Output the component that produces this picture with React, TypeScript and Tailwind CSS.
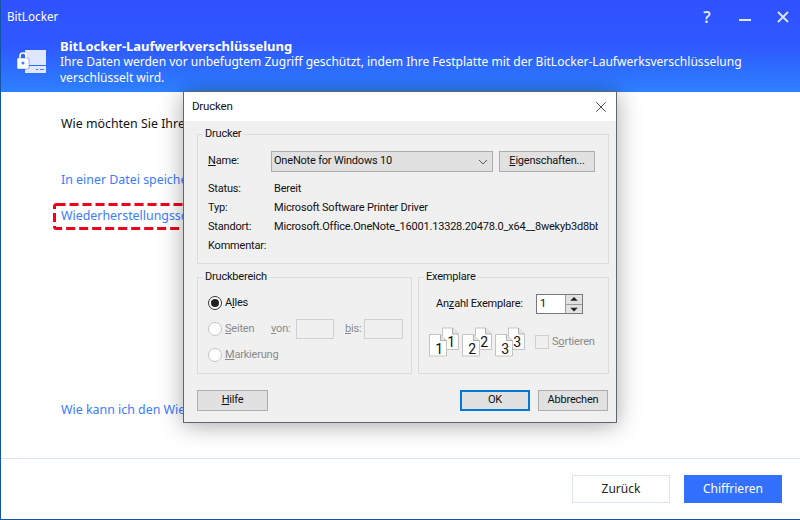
import { X } from 'lucide-react';
import type { ReactNode } from 'react';

function GroupBox({ title, className, children }: { title: string; className: string; children: ReactNode }) {
  return (
    <div className={`relative border border-[#dcdcdc] ${className}`}>
      <span className="absolute -top-[9px] left-[5px] bg-[#f0f0f0] px-[2px] leading-[16px] text-[#111]">{title}</span>
      {children}
    </div>
  );
}

function WinButton({ className, children }: { className: string; children: ReactNode }) {
  return (
    <div className={`flex h-[21px] items-center justify-center bg-[#e1e1e1] text-[#111] ${className}`}>{children}</div>
  );
}

function Radio({ checked, label, hotkey, rest }: { checked?: boolean; label?: string; hotkey: string; rest: string }) {
  return (
    <div className={`flex items-center gap-[3px] ${checked ? 'text-[#111]' : 'text-[#8a8a8a]'}`}>
      <span className={`flex h-[14px] w-[14px] items-center justify-center rounded-full border bg-white ${checked ? 'border-[#333]' : 'border-[#c4c4c4]'}`}>
        {checked && <span className="h-[8px] w-[8px] rounded-full bg-[#222]" />}
      </span>
      <span>
        {label}
        <u>{hotkey}</u>
        {rest}
      </span>
    </div>
  );
}

function CopyPair({ n }: { n: number }) {
  return (
    <svg width="33" height="30" viewBox="0 0 33 30">
      <path d="M13.5 1h10l6 6v15.5h-16z" fill="#fff" stroke="#c4c4c4" />
      <path d="M23.5 1v6h6" fill="#e4e4e4" stroke="#b0b0b0" />
      <text x="22" y="20" fontSize="14" textAnchor="middle" fill="#111" fontFamily="Roboto, sans-serif">{n}</text>
      <path d="M0.5 7.5h11l6 6v15.5h-17z" fill="#fff" stroke="#c4c4c4" />
      <path d="M11.5 7.5v6h6" fill="#e4e4e4" stroke="#b0b0b0" />
      <text x="10" y="27" fontSize="14" textAnchor="middle" fill="#111" fontFamily="Roboto, sans-serif">{n}</text>
    </svg>
  );
}

function PrintDialog() {
  return (
    <div className="absolute left-[182px] top-[91px] flex h-[332px] w-[434px] flex-col border border-[#5f6670] bg-[#f0f0f0] text-[11px] tracking-[-0.2px] text-[#111] shadow-[0_2px_22px_rgba(0,0,0,0.35)] [font-family:Roboto,sans-serif]">
      <div className="flex h-[29px] shrink-0 items-center justify-between bg-white pl-[8px] pr-[6px] text-[11.5px]">
        <span>Drucken</span>
        <X className="h-[18px] w-[18px]" strokeWidth={1} />
      </div>
      <div className="flex flex-1 flex-col pl-[13px] pr-[7px] pt-[13px]">
        <GroupBox title="Drucker" className="h-[130px] px-[10px] pt-[16px]">
          <div className="flex items-center">
            <span className="w-[63px]"><u>N</u>ame:</span>
            <div className="flex h-[21px] w-[222px] items-center justify-between border border-[#adadad] bg-[#e1e1e1] pl-[2px] pr-[4px]">
              <span>OneNote for Windows 10</span>
              <svg width="10" height="6" viewBox="0 0 10 6" fill="none" stroke="#555"><path d="M1 1l4 4 4-4" /></svg>
            </div>
            <WinButton className="ml-[6px] w-[96px] border border-[#adadad]">
              <span><u>E</u>igenschaften...</span>
            </WinButton>
          </div>
          <div className="mt-[9px] grid grid-cols-[66px_1fr] gap-y-[3px] leading-[16px]">
            <span>Status:</span>
            <span>Bereit</span>
            <span>Typ:</span>
            <span>Microsoft Software Printer Driver</span>
            <span>Standort:</span>
            <span className="w-[324px] overflow-hidden whitespace-nowrap">Microsoft.Office.OneNote_16001.13328.20478.0_x64__8wekyb3d8bbwe</span>
            <span>Kommentar:</span>
            <span />
          </div>
        </GroupBox>
        <div className="mt-[13px] flex gap-[6px]">
          <GroupBox title="Druckbereich" className="h-[97px] w-[215px] pl-[10px] pt-[17px]">
            <div className="flex flex-col gap-[8px] leading-[16px]">
              <Radio checked label="A" hotkey="l" rest="les" />
              <div className="flex items-center text-[#8a8a8a]">
                <div className="w-[63px]"><Radio hotkey="S" rest="eiten" /></div>
                <span className="w-[25px]"><u>v</u>on:</span>
                <span className="h-[20px] w-[38px] border border-[#d0d0d0] bg-[#f0f0f0]" />
                <span className="ml-[11px] w-[19px]"><u>b</u>is:</span>
                <span className="h-[20px] w-[39px] border border-[#d0d0d0] bg-[#f0f0f0]" />
              </div>
              <Radio hotkey="M" rest="arkierung" />
            </div>
          </GroupBox>
          <GroupBox title="Exemplare" className="h-[97px] w-[191px] pl-[10px] pt-[16px]">
            <div className="flex items-center pl-[7px]">
              <span className="w-[100px]">An<u>z</u>ahl Exemplare:</span>
              <div className="flex h-[20px] w-[47px] border border-[#7a7a7a] bg-white">
                <span className="flex-1 pl-[3px] leading-[18px]">1</span>
                <div className="flex w-[17px] flex-col border-l border-[#9a9a9a] bg-[#e1e1e1]">
                  <svg className="flex-1" viewBox="0 0 16 9" fill="#222"><path d="M8 2l4 4H4z" /></svg>
                  <svg className="flex-1 border-t border-[#9a9a9a]" viewBox="0 0 16 9" fill="#222"><path d="M4 3h8l-4 4z" /></svg>
                </div>
              </div>
            </div>
            <div className="mt-[13px] flex items-center">
              <CopyPair n={1} />
              <CopyPair n={2} />
              <CopyPair n={3} />
              <span className="ml-[7px] h-[14px] w-[14px] border border-[#cfcfcf] bg-[#f0f0f0]" />
              <span className="ml-[3px] text-[#8a8a8a]">S<u>o</u>rtieren</span>
            </div>
          </GroupBox>
        </div>
        <div className="mt-[16px] flex items-center">
          <WinButton className="w-[71px] border border-[#adadad]"><span><u>H</u>ilfe</span></WinButton>
          <WinButton className="ml-auto w-[70px] border-2 border-[#0078d7]">OK</WinButton>
          <WinButton className="ml-[8px] mr-[1px] w-[70px] border border-[#adadad]">Abbrechen</WinButton>
        </div>
      </div>
    </div>
  );
}

export default function App() {
  return (
    <div className="relative flex h-[520px] w-[800px] flex-col overflow-hidden border-b border-l border-[#1254a8] bg-white text-[12.4px] [font-family:'Noto_Sans',sans-serif]">
      <header className="h-[92px] shrink-0 bg-gradient-to-b from-[#2f52ff] via-[#2f58ff] to-[#2e80ff] text-white">
        <div className="flex h-[34px] items-center justify-between pl-[6px] pr-[9px]">
          <span className="text-[11.7px]">BitLocker</span>
          <div className="flex items-center gap-[22px] text-[#dfe6ff]">
            <span className="w-[16px] text-center text-[16px] font-semibold">?</span>
            <svg width="16" height="16" viewBox="0 0 16 16" stroke="currentColor" strokeWidth="2"><path d="M2 11h12" /></svg>
            <svg width="16" height="16" viewBox="0 0 16 16" stroke="currentColor" strokeWidth="1.8"><path d="M3 3l10 10M13 3L3 13" /></svg>
          </div>
        </div>
        <div className="flex pl-[16px] pt-[5px]">
          <svg className="mt-[11px]" width="30" height="24" viewBox="0 0 30 24">
            <path d="M8 0h21v15H8z" fill="#f2f6ff" opacity="0.9" />
            <path d="M8 16h21v7H8z" fill="#dfe8ff" />
            <path d="M23 19.5h4M19 19.5h2" stroke="#4d74ff" />
            <rect x="0" y="8" width="12" height="11" rx="1" fill="#fff" stroke="#3f66ff" strokeWidth="0.5" />
            <path d="M3 8V6a3 3 0 0 1 6 0v2" fill="none" stroke="#fff" strokeWidth="1.6" />
            <circle cx="6" cy="13" r="1.5" fill="#4d74ff" />
          </svg>
          <div className="ml-[13px] -mt-[1px] leading-[16px]">
            <div className="text-[13px] font-bold">BitLocker-Laufwerkverschlüsselung</div>
            <div className="w-[700px] text-[12.05px]">
              Ihre Daten werden vor unbefugtem Zugriff geschützt, indem Ihre Festplatte mit der BitLocker-Laufwerksverschlüsselung verschlüsselt wird.
            </div>
          </div>
        </div>
      </header>
      <main className="flex flex-1 flex-col pl-[60px] pt-[23px] text-[#3b7cff]">
        <p className="leading-[18px] text-[#111]">Wie möchten Sie Ihren Wiederherstellungsschlüssel sichern?</p>
        <p className="mt-[38px] leading-[18px]">In einer Datei speichern</p>
        <div className="relative -ml-[8px] mt-[14px] flex h-[27px] w-[140px] items-center overflow-hidden whitespace-nowrap pl-[8px]">
          Wiederherstellungsschlüssel drucken
          <svg className="absolute inset-0" width="140" height="27" fill="none">
            <rect x="1.5" y="1.5" width="137" height="24" rx="2" stroke="#f0001c" strokeWidth="3" strokeDasharray="9 4" />
          </svg>
        </div>
        <p className="mt-[171px] leading-[18px]">Wie kann ich den Wiederherstellungsschlüssel finden?</p>
      </main>
      <footer className="flex h-[61px] shrink-0 items-start justify-end gap-[14px] border-t border-[#dfe5ef] pr-[18px] pt-[16px]">
        <button className="h-[28px] w-[98px] border border-[#dfe5ef] text-[12px] text-[#222]">Zurück</button>
        <button className="h-[28px] w-[98px] bg-[#3370ff] text-[12px] text-white">Chiffrieren</button>
      </footer>
      <PrintDialog />
    </div>
  );
}
